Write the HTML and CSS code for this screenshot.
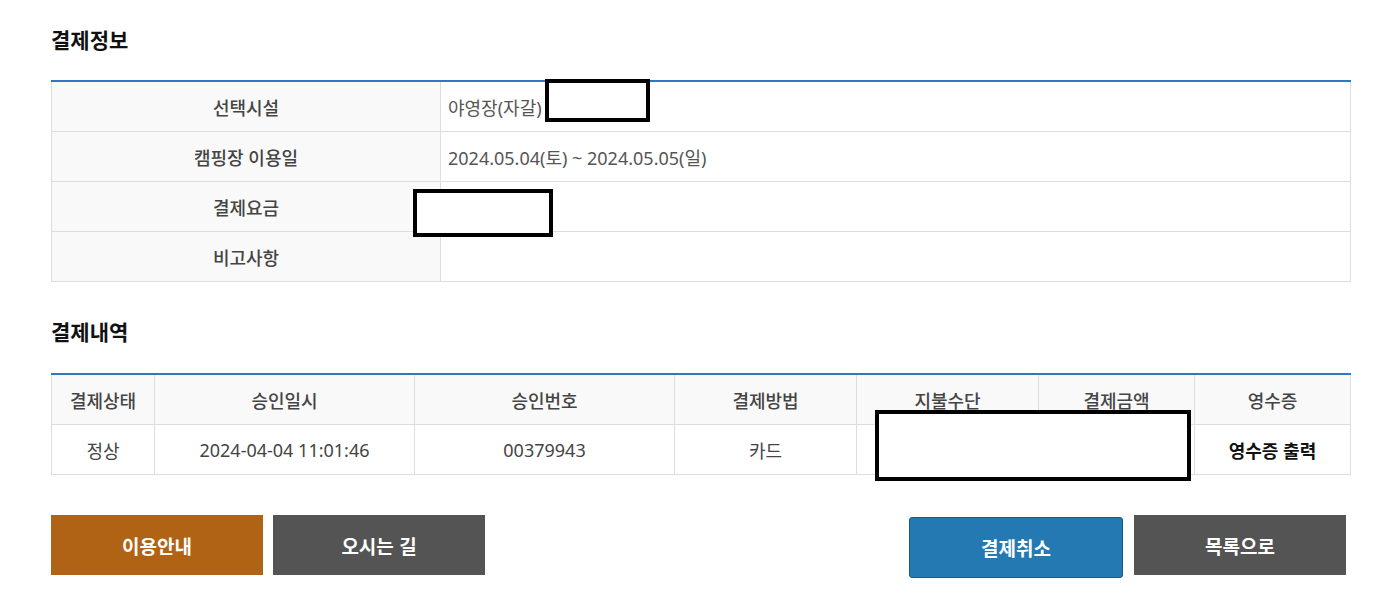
FILE: index.html
```html
<!DOCTYPE html>
<html lang="ko">
<head>
    <meta charset="UTF-8">
    <title>결제정보</title>
    <link rel="stylesheet" href="styles.css">
</head>
<body>
    <div class="page">
        <h2 class="title">결제정보</h2>
        <table class="info">
            <tr>
                <th>선택시설</th>
                <td>야영장(자갈)</td>
            </tr>
            <tr>
                <th>캠핑장 이용일</th>
                <td>2024.05.04(토) ~ 2024.05.05(일)</td>
            </tr>
            <tr>
                <th>결제요금</th>
                <td></td>
            </tr>
            <tr>
                <th>비고사항</th>
                <td></td>
            </tr>
        </table>

        <h2 class="title second">결제내역</h2>
        <table class="history">
            <thead>
                <tr>
                    <th class="c1">결제상태</th>
                    <th class="c2">승인일시</th>
                    <th class="c3">승인번호</th>
                    <th class="c4">결제방법</th>
                    <th class="c5">지불수단</th>
                    <th class="c6">결제금액</th>
                    <th>영수증</th>
                </tr>
            </thead>
            <tbody>
                <tr>
                    <td>정상</td>
                    <td>2024-04-04 11:01:46</td>
                    <td>00379943</td>
                    <td>카드</td>
                    <td></td>
                    <td></td>
                    <td><a class="receipt" href="#">영수증 출력</a></td>
                </tr>
            </tbody>
        </table>

        <div class="buttons">
            <div class="group">
                <a class="btn orange" href="#">이용안내</a>
                <a class="btn gray" href="#">오시는 길</a>
            </div>
            <div class="group">
                <a class="btn blue" href="#">결제취소</a>
                <a class="btn gray" href="#">목록으로</a>
            </div>
        </div>

        <!-- masked values -->
        <div class="mask m1"></div>
        <div class="mask m2"></div>
        <div class="mask m3"></div>
    </div>
</body>
</html>
```

FILE: styles.css
```css
body {
    margin: 0;
    background-color: #ffffff;
    font-family: "Noto Sans", "Noto Sans CJK KR", sans-serif;
    color: #555555;
}
.page {
    display: flow-root;
    position: relative;
    width: 1300px;
    padding: 0 0 0 51px;
}
.title {
    margin: 24px 0 26px;
    font-family: "Noto Sans CJK KR", sans-serif;
    font-size: 21px;
    line-height: 30px;
    font-weight: 700;
    color: #111111;
}
.title.second {
    margin: 34px 0 27px;
}
table {
    width: 100%;
    border-collapse: collapse;
    border-top: 2px solid #3278c0;
    font-size: 18px;
}
th, td {
    height: 49px;
    padding: 0;
    border: 1px solid #dddddd;
    border-top: none;
}
th {
    background-color: #f9f9f9;
    color: #444444;
    font-weight: 500;
    text-align: center;
}
.info th {
    width: 388px;
}
.info td {
    padding-left: 7px;
    text-align: left;
}
.history td {
    text-align: center;
    color: #444444;
}
.history .c1 { width: 102px; }
.history .c2 { width: 259px; }
.history .c3 { width: 259px; }
.history .c4 { width: 181px; }
.history .c5 { width: 181px; }
.history .c6 { width: 155px; }
.receipt {
    color: #111111;
    font-weight: 700;
    text-decoration: none;
}
.buttons {
    display: flex;
    justify-content: space-between;
    margin-top: 40px;
    padding-right: 5px;
}
.group {
    display: flex;
    gap: 10px;
    align-items: flex-start;
}
.btn {
    display: flex;
    align-items: center;
    justify-content: center;
    width: 212px;
    height: 60px;
    color: #ffffff;
    font-family: "Noto Sans CJK KR", sans-serif;
    font-size: 19px;
    font-weight: 700;
    text-decoration: none;
    box-sizing: border-box;
}
.orange {
    background-color: #b06314;
}
.gray {
    background-color: #545454;
}
.blue {
    width: 214px;
    height: 61px;
    margin-top: 2px;
    margin-right: 1px;
    background-color: #2479b2;
    border: 1px solid #17598a;
    border-radius: 3px;
}
.mask {
    position: absolute;
    background-color: #ffffff;
    border: 4px solid #000000;
    box-sizing: border-box;
}
.m1 {
    left: 545px;
    top: 79px;
    width: 105px;
    height: 43px;
}
.m2 {
    left: 413px;
    top: 189px;
    width: 140px;
    height: 48px;
}
.m3 {
    left: 875px;
    top: 410px;
    width: 316px;
    height: 71px;
}
```
